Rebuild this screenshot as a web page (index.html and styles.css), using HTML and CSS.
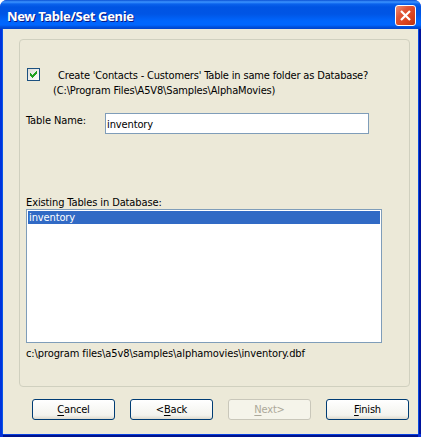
FILE: index.html
```html
<!DOCTYPE html>
<html lang="en">
<head>
<meta charset="utf-8">
<title>New Table/Set Genie</title>
<link rel="stylesheet" href="styles.css">
</head>
<body>
<div class="window">
  <header class="titlebar">
    <h1 class="title">New Table/Set Genie</h1>
    <button class="close" aria-label="Close">
      <svg width="11" height="11" viewBox="0 0 11 11"><path d="M1 1L10 10M10 1L1 10" stroke="#fff" stroke-width="2.2"/></svg>
    </button>
  </header>
  <main class="client">
    <section class="group">
      <div class="option">
        <span class="checkbox"><svg width="9" height="9" viewBox="0 0 9 9" shape-rendering="crispEdges"><path d="M1 3h1v1h1v1h1v-1h1v-1h1v-1h1v-1h1v3h-1v1h-1v1h-1v1h-1v1h-1v-1h-1v-1h-1z" fill="#21a121"/></svg></span>
        <div class="caption"><p class="line create">Create 'Contacts - Customers' Table in same folder as Database?</p><p class="line folder">(C:\Program Files\A5V8\Samples\AlphaMovies)</p></div>
      </div>
      <div class="field">
        <label class="line name">Table Name:</label>
        <div class="input"><span class="line item">inventory</span></div>
      </div>
      <p class="line existing">Existing Tables in Database:</p>
      <div class="list"><div class="row"><span class="line item">inventory</span></div></div>
      <p class="line path">c:\program files\a5v8\samples\alphamovies\inventory.dbf</p>
    </section>
    <footer class="buttons">
      <button class="btn"><span><u>C</u>ancel</span></button>
      <button class="btn"><span>&lt;<u>B</u>ack</span></button>
      <button class="btn disabled"><span><u>N</u>ext&gt;</span></button>
      <button class="btn"><span><u>F</u>inish</span></button>
    </footer>
  </main>
</div>
</body>
</html>
```
FILE: styles.css
```css
* { box-sizing: border-box; }
body {
  margin: 0;
  background: #fff;
  color: #000;
  font: 11px/15px "DejaVu Sans Condensed", "DejaVu Sans", sans-serif;
}
p, h1 { margin: 0; }
.window {
  width: 421px;
  height: 437px;
  display: flex;
  flex-direction: column;
  border-radius: 7px 7px 0 0;
  overflow: hidden;
  background: #0831d9;
}
.titlebar {
  height: 29px;
  flex: none;
  display: flex;
  justify-content: space-between;
  align-items: flex-start;
  padding: 5px 5px 0 7px;
  background: linear-gradient(#0a50d4 0, #3c94ff 2px, #0a62ec 4px, #0054e3 7px, #0055e5 14px, #0066fd 21px, #0066ff 25px, #0050dc 27px, #0144cc 29px);
}
.title {
  color: #fff;
  font: bold 13px/22px "Noto Sans", sans-serif;
  letter-spacing: -0.35px;
  text-shadow: 1px 1px 0 #0a1883;
  white-space: nowrap;
}
.close {
  width: 21px;
  height: 21px;
  padding: 0;
  display: grid;
  place-items: center;
  border: 1px solid #fff;
  border-radius: 3px;
  background: linear-gradient(135deg, #ee9077 0, #e05536 35%, #da421c 70%, #b93410 100%);
}
.client {
  flex: 1;
  margin: 0 3px 3px;
  padding: 10px 8px 0 16px;
  background: #ece9d8;
  box-shadow: -1px 0 #0855e8, -3px 0 #0033dc, 1px 0 #0849e0, 3px 0 #00139c, 0 1px #0840df, 0 3px #00138c;
}
.group {
  width: 391px;
  height: 348px;
  padding: 28px 0 0 7px;
  border: 1px solid #d0d0bf;
  border-radius: 4px;
}
.line {
  display: block;
  width: max-content;
  white-space: pre;
}
.option { display: flex; height: 45px; }
.checkbox {
  width: 13px;
  height: 13px;
  display: grid;
  place-items: center;
  border: 1px solid #1c5180;
  background: linear-gradient(135deg, #dcdcd7, #fff);
}
.caption { padding-left: 13px; }
.create { margin-left: 5px; letter-spacing: -0.17px; }
.folder { letter-spacing: -0.15px; }
.field { display: flex; height: 82px; }
.name { width: 79px; margin-left: -1px; letter-spacing: -0.1px; }
.item { letter-spacing: -0.12px; }
.input {
  width: 264px;
  height: 21px;
  padding: 3px 0 0 1px;
  border: 1px solid #7f9db9;
  background: #fff;
}
.existing { margin-left: -1px; height: 14px; letter-spacing: -0.11px; }
.list {
  width: 356px;
  height: 134px;
  margin-left: -1px;
  padding: 1px;
  border: 1px solid #7f9db9;
  background: #fff;
}
.row { height: 13px; padding-left: 1px; color: #fff; background: #316ac5; }
.row .line { line-height: 14px; }
.path { margin-top: 3px; margin-left: -1px; letter-spacing: -0.1px; }
.buttons { display: flex; gap: 15px; padding: 12px 0 0 13px; }
.btn {
  width: 83px;
  height: 21px;
  padding: 0;
  border: 1px solid #003c74;
  border-radius: 3px;
  color: #000;
  background: linear-gradient(#fff, #f3f3ee 80%, #dedace);
  font: inherit;
  line-height: 19px;
}
.btn span { letter-spacing: -0.2px; }
.btn u { text-underline-offset: 2px; text-decoration-thickness: 1px; text-decoration-skip-ink: none; }
.disabled { color: #aca899; border-color: #c9c7ba; background: #f5f4ea; }
```
